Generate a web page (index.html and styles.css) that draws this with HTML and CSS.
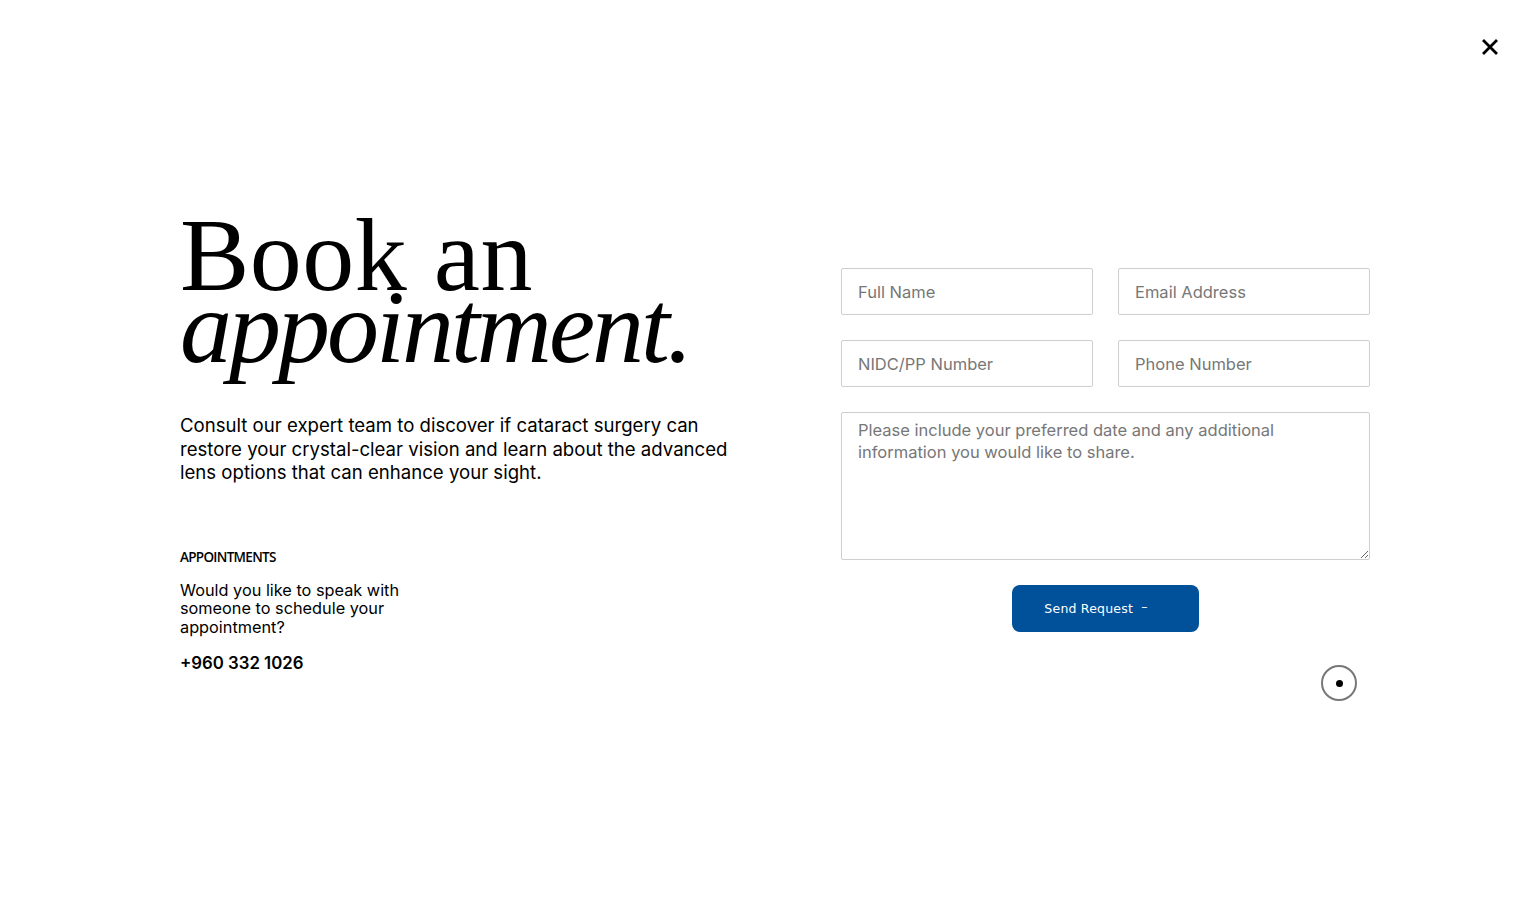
FILE: index.html
```html
<!DOCTYPE html>
<html lang="en">
<head>
    <meta charset="UTF-8">
    <title>Book an appointment</title>
    <link rel="stylesheet" href="styles.css">
</head>
<body>
    <button class="close" type="button" aria-label="Close">
        <svg width="16" height="16" viewBox="0 0 16 16"><path d="M2 2 L14 14 M14 2 L2 14" stroke="#000" stroke-width="2.8" stroke-linecap="square"/></svg>
    </button>

    <div class="booking">
        <div class="intro">
            <h1 class="title">Book an<br><em>appointment.</em></h1>
            <p class="lead">Consult our expert team to discover if cataract surgery can restore your crystal-clear vision and learn about the advanced lens options that can enhance your sight.</p>

            <h2 class="label">APPOINTMENTS</h2>
            <p class="question">Would you like to speak with someone to schedule your appointment?</p>
            <p class="phone">+960 332 1026</p>
        </div>

        <form class="form" id="bookingForm">
            <div class="row">
                <input type="text" placeholder="Full Name">
                <input type="email" placeholder="Email Address">
            </div>
            <div class="row">
                <input type="text" placeholder="NIDC/PP Number">
                <input type="tel" placeholder="Phone Number">
            </div>
            <textarea placeholder="Please include your preferred date and any additional information you would like to share."></textarea>
            <div class="actions">
                <button type="submit" class="send">Send Request <span class="dash">&ndash;</span></button>
            </div>
        </form>
    </div>

    <!-- custom cursor -->
    <div class="cursor"><span></span></div>
</body>
</html>
```

FILE: styles.css
```css
body {
    margin: 0;
    background: #fff;
    color: #000;
    font-family: Inter, "Open Sans", sans-serif;
}

.close {
    position: absolute;
    top: 39px;
    right: 36px;
    border: none;
    background: none;
    padding: 0;
    cursor: pointer;
}

.booking {
    display: flex;
    gap: 101px;
    padding: 219px 0 0 180px;
}

.intro {
    width: 560px;
}

.title {
    margin: 0;
    font-family: "Liberation Serif", serif;
    font-weight: 400;
    font-size: 104px;
    line-height: 72px;
    letter-spacing: 0.5px;
}

.title em {
    letter-spacing: -3px;
}

.lead {
    margin: 51px 0 0;
    font-size: 18.6px;
    line-height: 23.5px;
}

.label {
    margin: 64px 0 0;
    font-family: "Open Sans", sans-serif;
    font-weight: 600;
    font-size: 13.5px;
    line-height: 16px;
    letter-spacing: -0.7px;
}

.question {
    margin: 16px 0 0;
    width: 240px;
    font-size: 16.3px;
    line-height: 18.5px;
}

.phone {
    margin: 16px 0 0;
    font-size: 16.8px;
    font-weight: 600;
    line-height: 22px;
}

.form {
    width: 529px;
    margin-top: 49px;
    display: flex;
    flex-direction: column;
    gap: 25px;
}

.row {
    display: grid;
    grid-template-columns: 1fr 1fr;
    gap: 25px;
}

input,
textarea {
    box-sizing: border-box;
    width: 100%;
    min-width: 0;
    border: 1px solid #cfcfcf;
    border-radius: 2px;
    font-family: Inter, "Open Sans", sans-serif;
    font-size: 16.5px;
    color: #333;
    padding: 0 16px;
    outline: none;
}

input {
    height: 47px;
}

textarea {
    height: 148px;
    padding: 6px 16px;
    line-height: 22px;
    resize: vertical;
}

input::placeholder,
textarea::placeholder {
    color: #777;
}

.actions {
    display: flex;
    justify-content: center;
}

.send {
    width: 187px;
    height: 47px;
    border: none;
    border-radius: 8px;
    background: #00519a;
    color: #fff;
    font-family: "DejaVu Sans", sans-serif;
    font-size: 12.5px;
    letter-spacing: 0.2px;
    padding: 0 19px 2px 0;
    cursor: pointer;
}

.send .dash {
    margin-left: 4px;
    vertical-align: 2px;
}

.cursor {
    position: absolute;
    left: 1321px;
    top: 665px;
    width: 32px;
    height: 32px;
    border: 2px solid #777;
    border-radius: 50%;
    display: flex;
    align-items: center;
    justify-content: center;
}

.cursor span {
    width: 7px;
    height: 7px;
    border-radius: 50%;
    background: #000;
}
```
